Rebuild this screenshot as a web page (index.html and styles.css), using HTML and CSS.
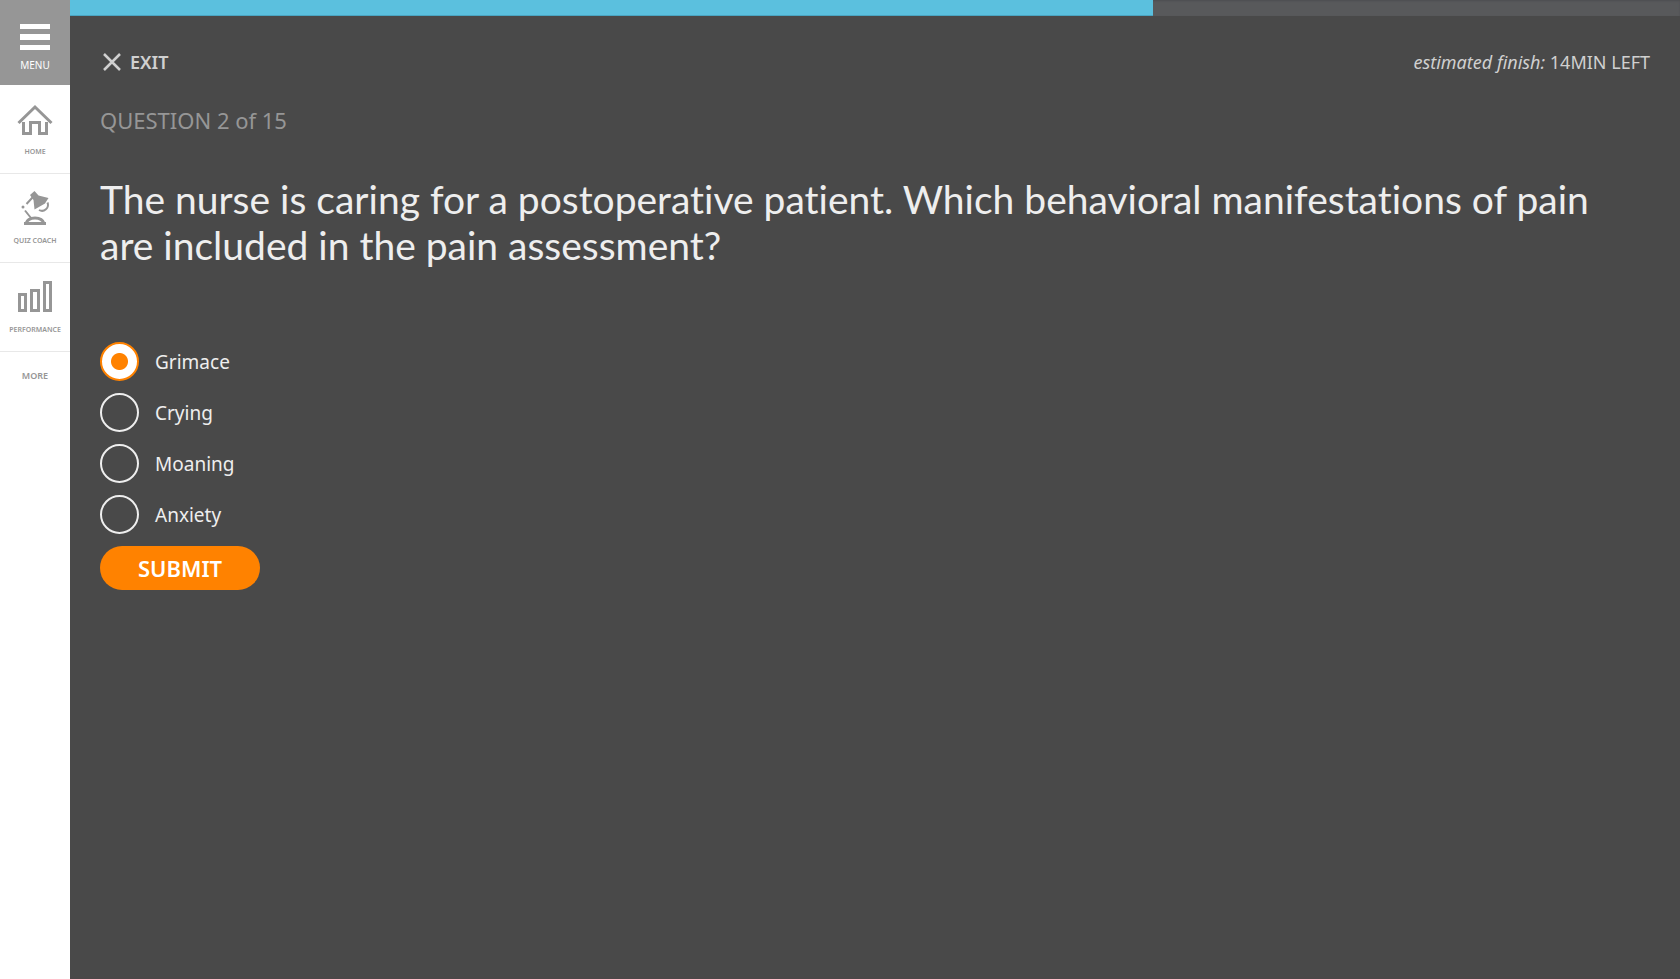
FILE: index.html
```html
<!DOCTYPE html>
<html lang="en">
<head>
<meta charset="utf-8">
<title>Quiz</title>
<link rel="stylesheet" href="styles.css">
</head>
<body>
<div class="app">
  <nav class="sidebar" aria-label="Main">
    <button class="menu" type="button">
      <svg class="menu-icon" viewBox="0 0 30 26" aria-hidden="true"><path d="M0 0h30v5H0zM0 10h30v6H0zM0 21h30v5H0z"/></svg>
      <span>MENU</span>
    </button>
    <a class="nav-item" href="#home">
      <svg class="nav-icon" viewBox="0 0 36 36" aria-hidden="true"><path class="line" d="M1.500 22 18 6 34.500 22M6.500 21V32.500H13.500V21.500H22.500V32.500H29.500V21"/></svg>
      <span>HOME</span>
    </a>
    <a class="nav-item" href="#quiz-coach">
      <svg class="nav-icon" viewBox="0 0 36 36" aria-hidden="true">
        <path class="solid" d="M13 5 17.500 1 21.500 5.500 31.500 8 28 13.500 17.500 19.500 16.500 10z"/>
        <circle class="solid" cx="6" cy="17" r="1.500"/>
        <path class="line thin" d="M15.500 7.500 9.500 14M8 20.500 14 28M30.500 12.500A6 6 0 0 1 22 20"/>
        <path class="line" d="M7 33.500H29M9 33.500C11 26 25 26 27 33.500"/>
      </svg>
      <span>QUIZ COACH</span>
    </a>
    <a class="nav-item" href="#performance">
      <svg class="nav-icon" viewBox="0 0 36 36" aria-hidden="true"><path class="line" d="M2.500 15.500h6v16h-6zM14.500 11.500h7v20h-7zM27.500 3.500h6v28h-6z"/></svg>
      <span>PERFORMANCE</span>
    </a>
    <a class="more" href="#more">MORE</a>
  </nav>
  <main class="main">
    <div class="progress"><div class="progress-fill"></div></div>
    <div class="content">
      <header class="top">
        <a class="exit" href="#exit">
          <svg class="exit-icon" viewBox="0 0 18 18" aria-hidden="true"><path d="M1 1l16 16M17 1 1 17"/></svg>
          EXIT
        </a>
        <p class="finish"><em>estimated finish:</em> 14MIN LEFT</p>
      </header>
      <p class="count">QUESTION 2 of 15</p>
      <h1 class="question">The nurse is caring for a postoperative patient. Which behavioral manifestations of pain are included in the pain assessment?</h1>
      <form class="answers">
        <label class="option"><input type="radio" name="answer" checked><span>Grimace</span></label>
        <label class="option"><input type="radio" name="answer"><span>Crying</span></label>
        <label class="option"><input type="radio" name="answer"><span>Moaning</span></label>
        <label class="option"><input type="radio" name="answer"><span>Anxiety</span></label>
        <button class="submit" type="button">SUBMIT</button>
      </form>
    </div>
  </main>
</div>
</body>
</html>
```
FILE: styles.css
```css
* { box-sizing: border-box; }
body {
  margin: 0;
  background: #494949;
  color: #eee;
  font-family: "Noto Sans", sans-serif;
}
p, h1 { margin: 0; font-weight: 400; }
a { color: inherit; text-decoration: none; }
.app { display: flex; min-height: 100vh; }

.sidebar {
  display: flex;
  flex-direction: column;
  flex: 0 0 70px;
  background: #fff;
  color: #969696;
}
.menu {
  display: flex;
  flex-direction: column;
  align-items: center;
  gap: 8px;
  height: 85px;
  padding: 24px 0 0;
  border: 0;
  background: #969696;
  color: #fff;
  font: 10px/14px "Noto Sans", sans-serif;
}
.menu-icon { width: 30px; height: 26px; fill: #fff; }
.nav-item {
  display: flex;
  flex-direction: column;
  align-items: center;
  gap: 8px;
  height: 89px;
  padding-top: 16px;
  border-bottom: 1px solid #e8e8e8;
  font: 600 7px/14px "Noto Sans", sans-serif;
}
.nav-icon { width: 36px; height: 36px; }
.line { fill: none; stroke: #969696; stroke-width: 3; }
.thin { stroke-width: 2; }
.solid { fill: #969696; }
.more {
  padding-top: 17px;
  text-align: center;
  font: 600 9px/14px "Noto Sans", sans-serif;
}

.main { flex: 1; min-width: 0; border-bottom: 2px solid #4b4748; }
.progress { height: 16px; background: #58595b; box-shadow: inset 0 1px 2px #4d4e50; }
.progress-fill {
  width: 67.25%;
  height: 100%;
  background: #5bc0de;
  border-bottom: 1px solid #4aa5c2;
}
.content { padding: 32px 30px; }
.top { display: flex; justify-content: space-between; align-items: center; height: 28px; }
.exit {
  display: flex;
  align-items: center;
  gap: 9px;
  padding-left: 3px;
  color: #d0d0d0;
  font-size: 18px;
  font-weight: 600;
}
.exit-icon { width: 18px; height: 18px; stroke: #d0d0d0; stroke-width: 2.5; }
.finish { color: #d0d0d0; font-size: 18px; }
.count { margin-top: 28px; color: #969696; font-size: 22px; line-height: 32px; }
.question {
  margin-top: 40px;
  font-family: Lato, sans-serif;
  font-size: 39px;
  font-variant-ligatures: none;
  line-height: 46px;
}
.answers { display: flex; flex-direction: column; align-items: flex-start; gap: 12px; margin-top: 74px; }
.option { display: flex; align-items: center; gap: 16px; font-size: 19px; line-height: 28px; }
.option input {
  appearance: none;
  width: 39px;
  height: 39px;
  margin: 0;
  border: 2px solid #eee;
  border-radius: 50%;
}
.option input:checked {
  border-color: #ff8200;
  background: radial-gradient(circle, #ff8200 8px, #fff 9px);
}
.submit {
  width: 160px;
  height: 44px;
  border: 0;
  border-radius: 22px;
  background: #ff8200;
  color: #fff;
  font: 600 22px/28px "Noto Sans", sans-serif;
}
```
